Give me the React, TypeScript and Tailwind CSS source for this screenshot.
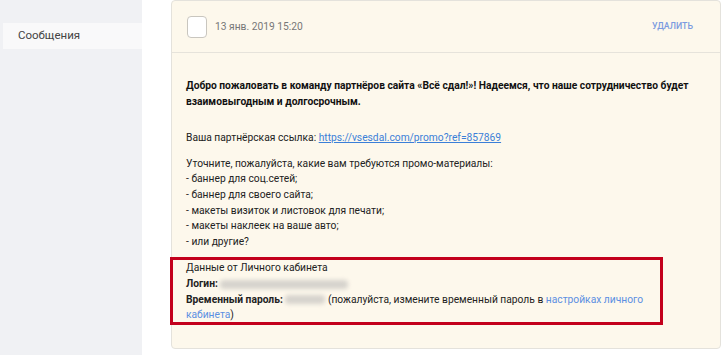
import React from "react";

export default function App() {
  return (
    <div className="flex w-[725px] h-[355px] overflow-hidden bg-white font-['Roboto',sans-serif] text-[10.25px] text-[#222]">
      {/* Left menu */}
      <aside className="w-[142px] shrink-0 bg-[#f0f1f4] pt-[23px] pl-[3px]">
        <div className="h-[26px] flex items-center pl-[15px] bg-[#f9f9fa] text-[11.5px] text-[#444]">Сообщения</div>
      </aside>

      {/* Messages */}
      <main className="flex-1 pl-[29px] pr-[4px]">
        <div className="relative h-[349px] rounded-[4px] border border-[#e4e2dc] bg-[#fdf8ec]">
          <div className="h-[52px] flex items-center pl-[15px] pr-[27px] border-b border-[#e6e3db]">
            <span className="w-[20px] h-[22px] rounded-[4px] border border-[#c9c6bf] bg-white" />
            <span className="ml-[8px] text-[10.25px] text-[#777]">13 янв. 2019 15:20</span>
            <span className="ml-auto text-[8.8px] font-medium uppercase text-[#7b9be0]">Удалить</span>
          </div>

          <div className="pl-[14px] pt-[25px] w-[540px] leading-[15.6px]">
            <p className="font-bold text-[#111]">
              Добро пожаловать в команду партнёров сайта «Всё сдал!»! Надеемся, что наше сотрудничество будет
              взаимовыгодным и долгосрочным.
            </p>
            <p className="mt-[21px]">
              Ваша партнёрская ссылка:{" "}
              <a className="text-[#3b7fd8] underline">https://vsesdal.com/promo?ref=857869</a>
            </p>
            <div className="mt-[10px]">
              <p>Уточните, пожалуйста, какие вам требуются промо-материалы:</p>
              <p>- баннер для соц.сетей;</p>
              <p>- баннер для своего сайта;</p>
              <p>- макеты визиток и листовок для печати;</p>
              <p>- макеты наклеек на ваше авто;</p>
              <p>- или другие?</p>
            </div>
            <div className="relative mt-[11px] w-[470px]">
              <p>Данные от Личного кабинета</p>
              <p>
                <b>Логин:</b>{" "}
                <span className="inline-block align-middle w-[128px] h-[9px] rounded-sm bg-[#d6d3cd] blur-[2px]" />
              </p>
              <p>
                <b>Временный пароль:</b>{" "}
                <span className="inline-block align-middle w-[40px] h-[9px] rounded-sm bg-[#d6d3cd] blur-[2px]" />{" "}
                (пожалуйста, измените временный пароль в{" "}
                <a className="text-[#5b8fe2]">настройках личного кабинета</a>)
              </p>
              <div className="absolute -left-[16px] -top-[3px] w-[493px] h-[68px] border-[3px] border-[#c3001c]" />
            </div>
          </div>
        </div>
      </main>
    </div>
  );
}
